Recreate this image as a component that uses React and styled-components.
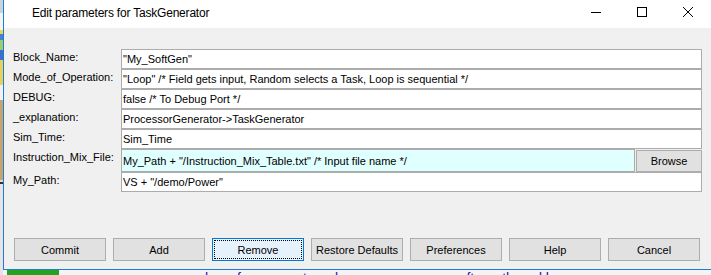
import styled, { createGlobalStyle } from 'styled-components'

const GlobalStyle = createGlobalStyle`
  html, body {
    margin: 0;
    padding: 0;
    background: #f0f0f0;
  }
  body {
    font-family: "Liberation Sans", Arial, sans-serif;
    font-size: 11px;
    color: #000;
  }
`;

const fields = [
  { name: 'Block_Name:', value: '"My_SoftGen"' },
  { name: 'Mode_of_Operation:', value: '"Loop" /* Field gets input, Random selects a Task, Loop is sequential */' },
  { name: 'DEBUG:', value: 'false /* To Debug Port */' },
  { name: '_explanation:', value: 'ProcessorGenerator->TaskGenerator' },
  { name: 'Sim_Time:', value: 'Sim_Time' },
  { name: 'Instruction_Mix_File:', value: 'My_Path + "/Instruction_Mix_Table.txt" /* Input file name */', file: true },
  { name: 'My_Path:', value: 'VS + "/demo/Power"' },
];

const buttons = ['Commit', 'Add', 'Remove', 'Restore Defaults', 'Preferences', 'Help', 'Cancel'];

const desktopStrip = [
  ['#c9d3dc', 13], ['#f4f4f4', 17], ['#e8d84a', 4], ['#4a7fd0', 6], ['#9ccf6a', 10],
  ['#3b6fc9', 10], ['#e6d25a', 25], ['#f2f2f2', 15], ['#c9a46a', 80], ['#dcdcdc', 2],
  ['#333', 2], ['#e4e4e4', 93],
];

export default function App() {
  return (
    <Desktop>
      <GlobalStyle />
      <LeftStrip>
        {desktopStrip.map(([color, h], i) => (
          <StripBlock key={i} $color={color} $h={h} />
        ))}
      </LeftStrip>
      <Column>
        <Window>
          <TitleBar>
            <Title>Edit parameters for TaskGenerator</Title>
            <Controls>
              <ControlButton>
                <svg width="10" height="10" viewBox="0 0 10 10">
                  <path d="M0 5.5H10" stroke="#000" strokeWidth="1" />
                </svg>
              </ControlButton>
              <ControlButton>
                <svg width="10" height="10" viewBox="0 0 10 10">
                  <rect x="0.5" y="0.5" width="9" height="9" fill="none" stroke="#000" strokeWidth="1" />
                </svg>
              </ControlButton>
              <ControlButton>
                <svg width="10" height="10" viewBox="0 0 10 10">
                  <path d="M0 0L10 10M10 0L0 10" stroke="#000" strokeWidth="1" />
                </svg>
              </ControlButton>
            </Controls>
          </TitleBar>
          <Content>
            <Form>
              {fields.map(f => (
                <Row key={f.name}>
                  <Label>{f.name}</Label>
                  <FieldCell>
                    <Input $file={f.file}>{f.value}</Input>
                    {f.file && <BrowseButton>Browse</BrowseButton>}
                  </FieldCell>
                </Row>
              ))}
            </Form>
            <ButtonRow>
              {buttons.map(b => (
                <Button key={b} $focused={b === 'Remove'}>
                  {b === 'Remove' ? <FocusRing>{b}</FocusRing> : b}
                </Button>
              ))}
            </ButtonRow>
          </Content>
        </Window>
        <BottomStrip>
          <GreenBlock />
          <BlueText>here from an external memory source or after a thread has</BlueText>
        </BottomStrip>
      </Column>
    </Desktop>
  );
}

const Desktop = styled.div`
  width: 711px;
  height: 275px;
  overflow: hidden;
  display: flex;
  flex-direction: row;
  background: #e6e6e6;
`;

const LeftStrip = styled.div`
  width: 3px;
  flex-shrink: 0;
  display: flex;
  flex-direction: column;
`;

const StripBlock = styled.div`
  height: ${p => p.$h}px;
  background: ${p => p.$color};
  flex-shrink: 0;
`;

const Column = styled.div`
  flex: 1;
  display: flex;
  flex-direction: column;
`;

const Window = styled.div`
  height: 270px;
  box-sizing: border-box;
  border-left: 1px solid #1f7bd4;
  border-bottom: 1px solid #1f7bd4;
  display: flex;
  flex-direction: column;
  background: #f0f0f0;
`;

const TitleBar = styled.div`
  height: 28px;
  flex-shrink: 0;
  background: #fff;
  display: flex;
  align-items: center;
`;

const Title = styled.div`
  flex: 1;
  padding-left: 28px;
  font-size: 12px;
  letter-spacing: -0.2px;
  color: #000;
  padding-bottom: 3px;
`;

const Controls = styled.div`
  display: flex;
  height: 100%;
`;

const ControlButton = styled.div`
  width: 46px;
  height: 100%;
  display: flex;
  align-items: center;
  justify-content: center;
  padding-bottom: 4px;
  box-sizing: border-box;
`;

const Content = styled.div`
  flex: 1;
  padding: 21px 9px 0 9px;
  display: flex;
  flex-direction: column;
`;

const Form = styled.div`
  display: flex;
  flex-direction: column;
`;

const Row = styled.div`
  display: grid;
  grid-template-columns: 108px 1fr;
`;

const Label = styled.div`
  padding-top: 2px;
  white-space: nowrap;
`;

const FieldCell = styled.div`
  display: flex;
  align-items: center;
  gap: 1px;
`;

const Input = styled.div`
  flex: 1;
  height: ${p => (p.$file ? 23 : 20)}px;
  box-sizing: border-box;
  border: 1px solid #acacac;
  background: ${p => (p.$file ? '#e0ffff' : '#fff')};
  padding: 0 1px;
  display: flex;
  align-items: center;
  white-space: nowrap;
  overflow: hidden;
`;

const BrowseButton = styled.div`
  width: 66px;
  height: 22px;
  box-sizing: border-box;
  border: 1px solid #adadad;
  background: #e1e1e1;
  display: flex;
  align-items: center;
  justify-content: center;
`;

const ButtonRow = styled.div`
  margin-top: 46px;
  padding-left: 1px;
  display: flex;
  gap: 7px;
`;

const Button = styled.div`
  width: 92px;
  height: 23px;
  box-sizing: border-box;
  border: 1px solid ${p => (p.$focused ? '#0078d7' : '#adadad')};
  background: ${p => (p.$focused ? '#e5f1fb' : '#e1e1e1')};
  display: flex;
  align-items: center;
  justify-content: center;
  white-space: nowrap;
  padding: ${p => (p.$focused ? '1px' : '0')};
`;

const FocusRing = styled.div`
  width: 100%;
  height: 100%;
  box-sizing: border-box;
  border: 1px dotted #000;
  display: flex;
  align-items: center;
  justify-content: center;
`;

const BottomStrip = styled.div`
  height: 5px;
  overflow: hidden;
  display: flex;
  align-items: flex-start;
  background: #f4f4f4;
`;

const GreenBlock = styled.div`
  width: 52px;
  height: 5px;
  margin-left: 4px;
  background: #22a322;
`;

const BlueText = styled.div`
  margin-left: 146px;
  color: #1a1aa8;
  font-size: 14px;
  line-height: 14px;
  white-space: nowrap;
  margin-top: 1px;
  text-decoration: underline;
`;
